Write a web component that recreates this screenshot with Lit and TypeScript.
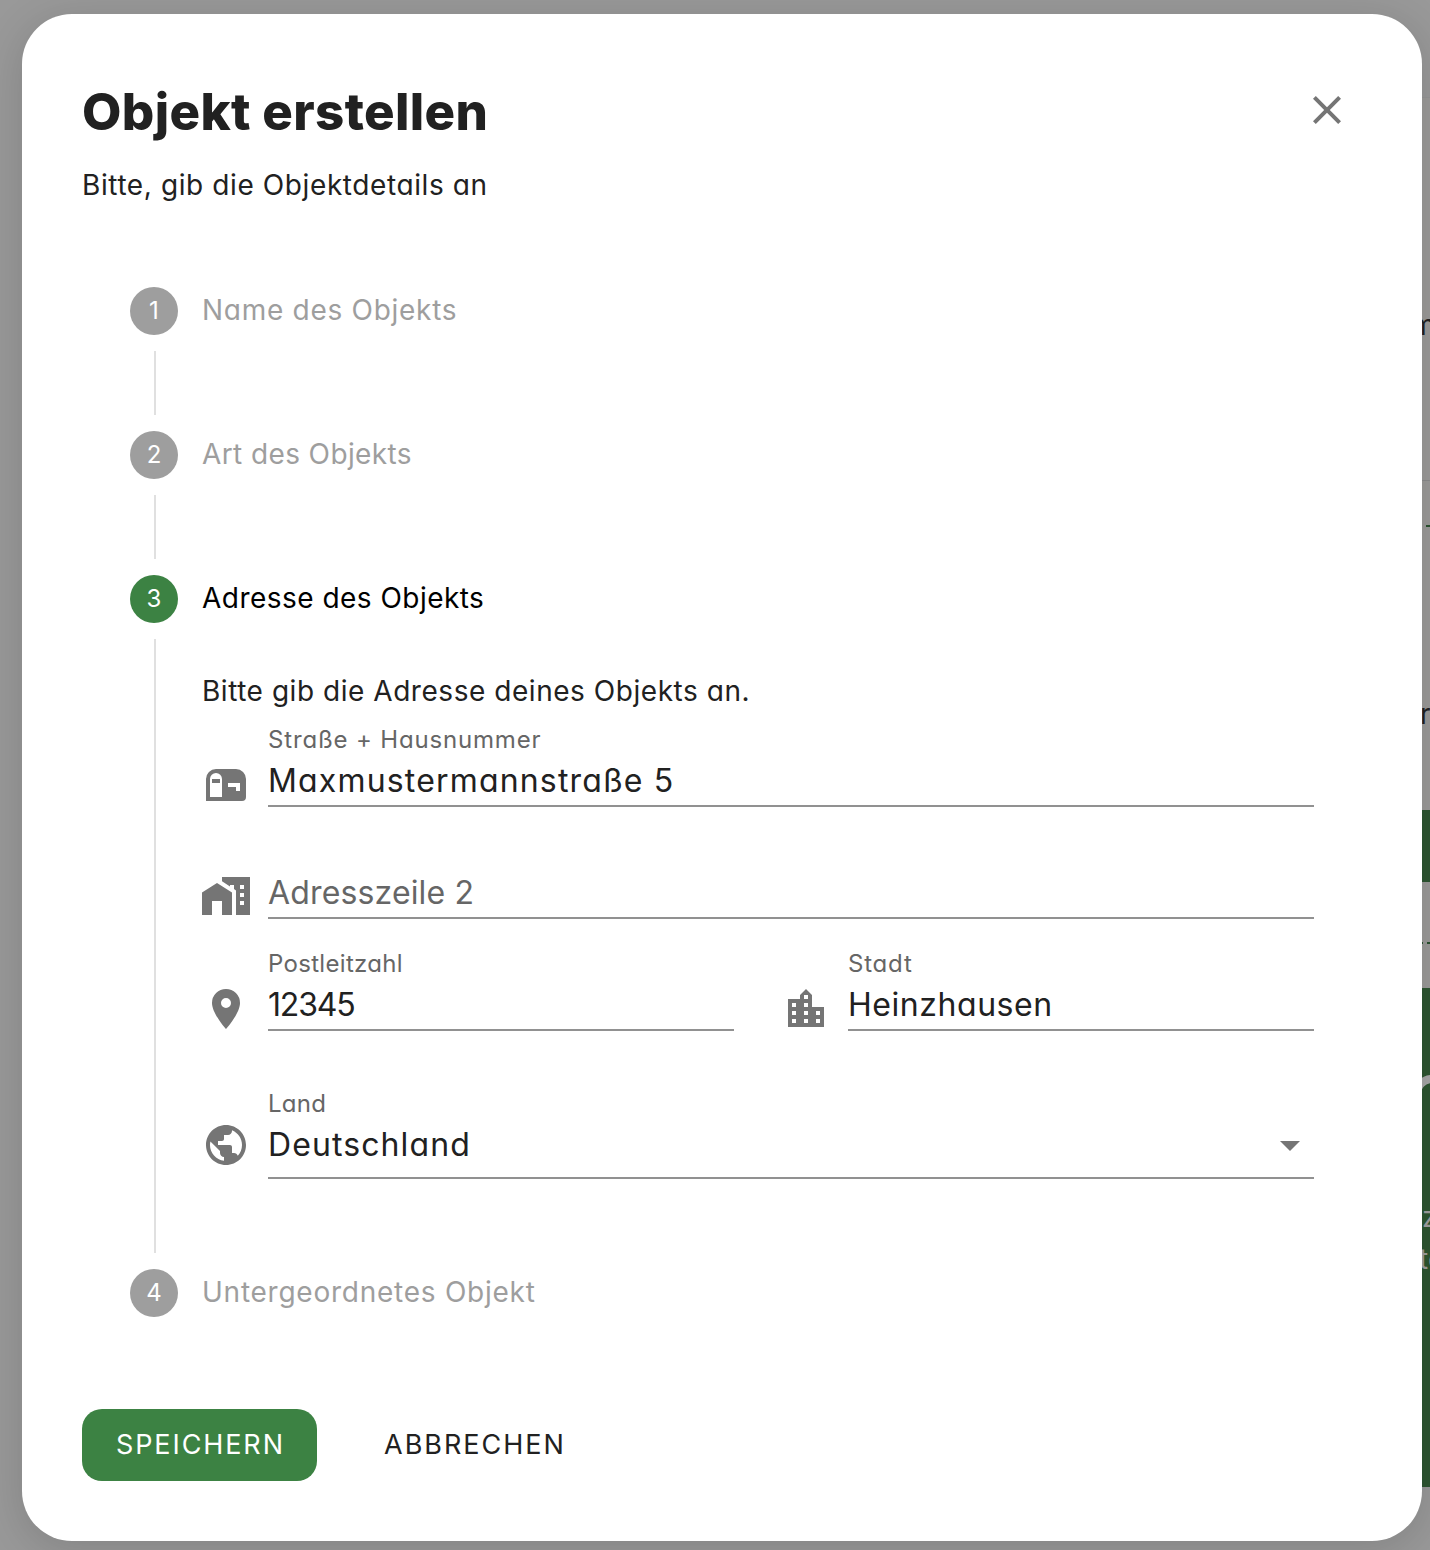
import { LitElement, html, css, svg } from "lit";
import { classMap } from "lit/directives/class-map.js";

const ICONS: Record<string, string> = {
  close: "M19,6.41L17.59,5L12,10.59L6.41,5L5,6.41L10.59,12L5,17.59L6.41,19L12,13.41L17.59,19L19,17.59L13.41,12L19,6.41Z",
  mailbox: "M17,4H7A5,5 0 0,0 2,9V20H20A2,2 0 0,0 22,18V9A5,5 0 0,0 17,4M10,18H4V9A3,3 0 0,1 7,6A3,3 0 0,1 10,9V18M19,15H17V13H13V11H19V15M9,11H5V9H9V11Z",
  homeCity: "M0,22V10.8L7.5,6L15,10.8V22H10V15H5V22H0ZM10,3V5.1L14,7.7V7H16V9L17,9.8V22H24V3H10ZM19,7H21V9H19V7ZM19,11H21V13H19V11ZM19,15H21V17H19V15Z",
  marker: "M12,11.5A2.5,2.5 0 0,1 9.5,9A2.5,2.5 0 0,1 12,6.5A2.5,2.5 0 0,1 14.5,9A2.5,2.5 0 0,1 12,11.5M12,2A7,7 0 0,0 5,9C5,14.25 12,22 12,22C12,22 19,14.25 19,9A7,7 0 0,0 12,2Z",
  city: "M19,15H17V13H19M19,19H17V17H19M13,7H11V5H13M13,11H11V9H13M13,15H11V13H13M13,19H11V17H13M7,11H5V9H7M7,15H5V13H7M7,19H5V17H7M15,11V5L12,2L9,5V7H3V21H21V11H15Z",
  earth: "M12 2C6.48 2 2 6.48 2 12s4.48 10 10 10 10-4.48 10-10S17.52 2 12 2zm-1 17.93c-3.95-.49-7-3.85-7-7.93 0-.62.08-1.21.21-1.79L9 15v1c0 1.1.9 2 2 2v1.93zm6.9-2.54c-.26-.81-1-1.39-1.9-1.39h-1v-3c0-.55-.45-1-1-1H8v-2h2c.55 0 1-.45 1-1V7h2c1.1 0 2-.9 2-2v-.41c2.93 1.19 5 4.06 5 7.41 0 2.08-.8 3.97-2.1 5.39z",
  caret: "M7,10L12,15L17,10H7Z",
};

const icon = (name: string) =>
  html`<svg class="icon" viewBox="0 0 24 24">${svg`<path fill-rule="evenodd" d=${ICONS[name]}></path>`}</svg>`;

class AppRoot extends LitElement {
  static styles = css`
    :host {
      display: block;
      position: relative;
      height: 1550px;
      overflow: hidden;
      background: #999;
      color: #212121;
      font-family: Inter, "Open Sans", sans-serif;
      font-feature-settings: "cv11", "calt" 0;
      font-size: 28px;
      line-height: 40px;
      white-space: nowrap;
    }
    * { box-sizing: border-box; }
    .page { display: flex; flex-direction: column; align-items: flex-end; height: 1550px; }
    .band { width: 12px; flex: none; overflow: hidden; position: relative; }
    .toolbar { height: 97px; }
    .card { height: 384px; background: #9c9b99; border-top: 1px solid #959595; border-bottom: 1px solid #8c8c8c; }
    .info { height: 329px; background: #9c9b99; }
    .strip { height: 72px; background: #2d5631; }
    .plain { height: 106px; background: #9c9b99; }
    .promo { height: 499px; background: #2d5631; color: #a0a0a0; }
    .peek { position: absolute; }
    .m { left: -7px; top: 207px; }
    .r { left: 2px; top: 213px; }
    .z { left: 4px; top: 209px; }
    .te { left: 1px; top: 251px; }
    .big { left: -5px; top: 87px; width: 38px; height: 38px; border: 8px solid #a8a8a8; border-radius: 50%; clip-path: inset(0 0 24px 0); }
    .dash { left: 8px; top: 44px; width: 8px; height: 2px; background: #2b532f; }
    .dots { top: 60px; left: 9px; width: 3px; height: 2px; background: #2b532f; }
    .dots.first { left: 4px; width: 1px; }

    .dialog {
      position: absolute;
      left: 22px;
      top: 14px;
      width: 1400px;
      height: 1527px;
      padding: 68px 60px 60px;
      border-radius: 50px;
      background: #fff;
      box-shadow: 0 8px 44px 2px rgba(0, 0, 0, 0.14);
    }
    .head { display: flex; justify-content: space-between; }
    .title { margin: 0; font-size: 51px; font-weight: 800; line-height: 60px; letter-spacing: 0.35px; }
    .sub { margin: 23px 0 82px; letter-spacing: 0.6px; }
    .icon { display: block; width: 48px; height: 48px; flex: none; fill: #757575; }
    .close { margin: 4px 11px 0 0; }

    .stepper { padding: 0 48px; }
    .step-head { display: flex; align-items: center; gap: 24px; height: 48px; color: #9e9e9e; }
    .step-name { margin-bottom: 2px; }
    .badge {
      display: flex; align-items: center; justify-content: center;
      width: 48px; height: 48px; border-radius: 50%;
      background: #9e9e9e; color: #fff; font-size: 24px; letter-spacing: 0;
    }
    .active { color: #000; }
    .active .badge { background: #3c8243; }
    .step-body { display: grid; grid-template-columns: 2px 1fr; column-gap: 46px; margin: 16px 0 16px 24px; min-height: 64px; }
    .line { background: #e0e0e0; }
    .form { height: 614px; padding-top: 32px; }
    .desc { margin-bottom: 15px; letter-spacing: 0.54px; }

    .row { display: flex; gap: 48px; height: 81px; }
    .after-31 { margin-bottom: 31px; }
    .after-59 { margin-bottom: 59px; }
    .field { display: flex; align-items: flex-start; gap: 18px; flex: 1; }
    .field .icon { margin-top: 35px; }
    .raise { margin-top: -2px; }
    .raise4 { margin-top: -4px; }
    .control { flex: 1; border-bottom: 2px solid #919191; height: 81px; }
    .tall { height: 89px; }
    .label { height: 28px; line-height: 27px; font-size: 24px; color: #666; }
    .value { display: flex; justify-content: space-between; height: 51px; padding-top: 1px; line-height: 51px; font-size: 32px; }
    .muted { color: #666; }
    .value .icon { margin-top: 2px; }

    .actions { display: flex; gap: 32px; margin-top: 92px; }
    .btn {
      height: 72px; padding: 0 35px; border: 0; border-radius: 20px; background: none;
      color: #212121; font: inherit; font-size: 27px; line-height: 70px; letter-spacing: 2px;
    }
    .primary { width: 235px; padding: 0 0 0 34px; text-align: left; background: #3c8243; color: #fff; letter-spacing: 1.9px; }

    .t-name { letter-spacing: 0.72px; }
    .t-art { letter-spacing: 0.39px; }
    .t-adr { letter-spacing: 0.47px; }
    .t-sub { letter-spacing: 0.75px; }
    .t-street { letter-spacing: 0.83px; }
    .t-plz { letter-spacing: 0.31px; }
    .t-stadt { letter-spacing: 0.8px; }
    .t-land { letter-spacing: 0.3px; }
    .t-max { letter-spacing: 1.17px; }
    .t-adr2 { letter-spacing: 0.15px; }
    .t-num { letter-spacing: -1.2px; }
    .t-heinz { letter-spacing: 0.55px; }
    .t-deu { letter-spacing: 1.1px; }
  `;

  stepHead(n: number, text: string, cls: string, active = false) {
    return html`<div class=${classMap({ "step-head": true, active })}>
      <span class="badge">${n}</span><span class="step-name ${cls}">${text}</span>
    </div>`;
  }

  field(ic: string, lift: string, label: string, lc: string, value: string, vc: string, select = false) {
    return html`<div class="field">
      <div class=${lift}>${icon(ic)}</div>
      <div class=${classMap({ control: true, tall: select })}>
        <div class="label"><span class=${lc}>${label}</span></div>
        <div class="value"><span class=${vc}>${value}</span>${select ? icon("caret") : ""}</div>
      </div>
    </div>`;
  }

  render() {
    return html`
      <div class="page">
        <div class="band toolbar"></div>
        <div class="band card"><span class="peek m">m</span></div>
        <div class="band info"><i class="peek dash"></i><span class="peek r">r</span></div>
        <div class="band strip"></div>
        <div class="band plain"><i class="peek dots first"></i><i class="peek dots"></i></div>
        <div class="band promo"><i class="peek big"></i><span class="peek z">z</span><span class="peek te">te</span></div>
      </div>
      <div class="dialog">
        <div class="head">
          <h1 class="title">Objekt erstellen</h1>
          <div class="close">${icon("close")}</div>
        </div>
        <div class="sub">Bitte, gib die Objektdetails an</div>
        <div class="stepper">
          ${this.stepHead(1, "Name des Objekts", "t-name")}
          <div class="step-body"><div class="line"></div></div>
          ${this.stepHead(2, "Art des Objekts", "t-art")}
          <div class="step-body"><div class="line"></div></div>
          ${this.stepHead(3, "Adresse des Objekts", "t-adr", true)}
          <div class="step-body">
            <div class="line"></div>
            <div class="form">
              <div class="desc">Bitte gib die Adresse deines Objekts an.</div>
              <div class="row after-31">
                ${this.field("mailbox", "", "Straße + Hausnummer", "t-street", "Maxmustermannstraße 5", "t-max")}
              </div>
              <div class="row after-31">
                ${this.field("homeCity", "raise", "", "", "Adresszeile 2", "muted t-adr2")}
              </div>
              <div class="row after-59">
                ${this.field("marker", "", "Postleitzahl", "t-plz", "12345", "t-num")}
                ${this.field("city", "", "Stadt", "t-stadt", "Heinzhausen", "t-heinz")}
              </div>
              <div class="row">
                ${this.field("earth", "raise4", "Land", "t-land", "Deutschland", "t-deu", true)}
              </div>
            </div>
          </div>
          ${this.stepHead(4, "Untergeordnetes Objekt", "t-sub")}
        </div>
        <div class="actions">
          <button class="btn primary">SPEICHERN</button>
          <button class="btn">ABBRECHEN</button>
        </div>
      </div>
    `;
  }
}
customElements.define("app-root", AppRoot);
